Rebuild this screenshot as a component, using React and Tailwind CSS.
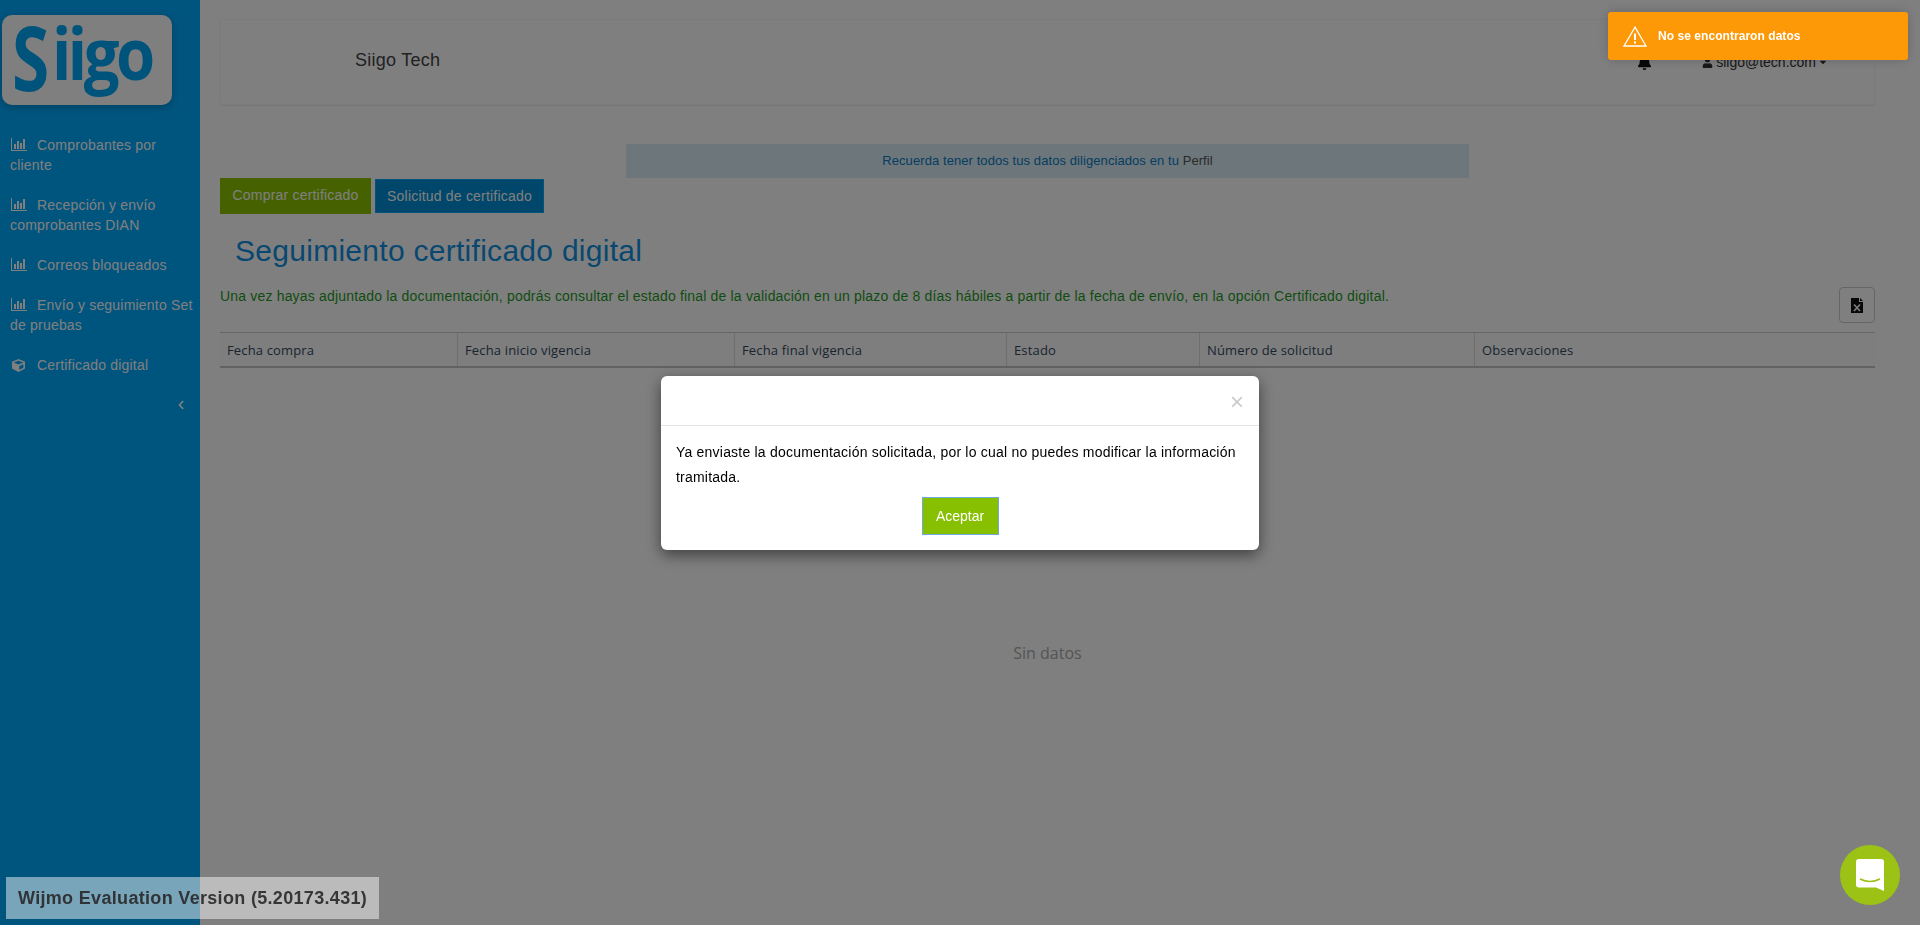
import React from "react";
import { FaBell, FaCube, FaUser, FaCaretDown, FaChevronLeft } from "react-icons/fa";

const BarIcon = () => (
  <svg width="16" height="13" viewBox="0 0 16 13" className="inline-block mr-[10px] ml-[1px] align-[-1px]" fill="currentColor">
    <rect x="0" y="0" width="1" height="13" />
    <rect x="0" y="12" width="16" height="1" />
    <rect x="3" y="6" width="2" height="5" />
    <rect x="6" y="3" width="2" height="8" />
    <rect x="9" y="5" width="2" height="6" />
    <rect x="12" y="1" width="2" height="10" />
  </svg>
);

const menu = ["Comprobantes por cliente", "Recepción y envío comprobantes DIAN", "Correos bloqueados", "Envío y seguimiento Set de pruebas"];
const cols = ["Fecha compra", "Fecha inicio vigencia", "Fecha final vigencia", "Estado", "Número de solicitud", "Observaciones"];

export default function App() {
  return (
    <div className="h-screen flex overflow-hidden bg-white text-[14px] leading-[20px] font-['Liberation_Sans',Arial,sans-serif]">
      <aside className="w-[200px] shrink-0 bg-[#00aaff] text-white">
        <div className="ml-[2px] mt-[15px] w-[170px] h-[90px] bg-white rounded-[10px] shadow-[0_2px_8px_rgba(0,0,0,0.25)] pl-[10px] flex items-baseline text-[#00a8f8] font-['Open_Sans',sans-serif] font-bold leading-[60px]">
          <span className="inline-block w-[40px] text-[90px] origin-left scale-x-[0.75] translate-y-[11px]">S</span>
          <span className="inline-block text-[72px] tracking-[-4px] origin-left scale-x-[0.88]">iigo</span>
        </div>
        <ul className="mt-[30px] pl-[10px] pr-[6px] flex flex-col gap-[20px] tracking-[0.2px]">
          {menu.map((m) => (
            <li key={m}><BarIcon />{m}</li>
          ))}
          <li className="flex items-center">
            <FaCube className="w-[13px] h-[13px] ml-[2px] mr-[12px]" />
            Certificado digital
          </li>
        </ul>
        <div className="flex justify-end pr-[15px] mt-[20px] h-[20px] items-center">
          <FaChevronLeft className="w-[8px] h-[10px]" />
        </div>
      </aside>

      <main className="flex-1 pl-[20px] pr-[45px] min-w-0">
        <header className="mt-[19px] h-[86px] border border-[#f7f7f7] shadow-[0_1px_1px_rgba(0,0,0,0.08)] rounded-[2px] flex items-center justify-between pl-[134px] pr-[46px] text-[#555]">
          <span className="text-[18px] text-[#444] -mt-[4px] tracking-[0.25px]">Siigo Tech</span>
          <div className="flex items-center text-[#333] text-[14px]">
            <span className="relative mr-[50px]">
              <FaBell className="w-[15px] h-[15px] text-[#111]" />
              <span className="absolute top-[1px] left-[11px] w-[11px] h-[2px] rounded-full bg-[#e84c3d]" />
            </span>
            <FaUser className="w-[11px] h-[11px] mr-[3px]" />
            <span>siigo@tech.com</span>
            <FaCaretDown className="w-[10px] h-[10px] ml-[2px]" />
          </div>
        </header>

        <div className="mt-[39px] mx-auto w-[843px] h-[34px] bg-[#d9edf7] flex items-center justify-center text-[13px] tracking-[0.08px] text-[#0a7bc0]">
          Recuerda tener todos tus datos diligenciados en tu&nbsp;<span className="text-[#555]">Perfil</span>
        </div>

        <div className="flex items-center gap-[4px] h-[36px] text-[14px] tracking-[0.2px]">
          <button className="w-[151px] h-[36px] pb-[2px] bg-[#8cc300] text-white">Comprar certificado</button>
          <button className="w-[169px] h-[34px] bg-[#008ed6] border border-[#00aaff] text-white">Solicitud de certificado</button>
        </div>

        <h1 className="mt-[20px] pl-[15px] text-[30px] leading-[33px] tracking-[0.28px] text-[#1190e0]">Seguimiento certificado digital</h1>

        <div className="mt-[19px] flex justify-between items-start text-[#1f9a1f]">
          <p className="tracking-[0.18px]">Una vez hayas adjuntado la documentación, podrás consultar el estado final de la validación en un plazo de 8 días hábiles a partir de la fecha de envío, en la opción Certificado digital.</p>
          <button className="mt-[1px] w-[36px] h-[36px] border border-[#ccc] rounded-[4px] flex items-center justify-center">
            <svg width="12" height="15" viewBox="0 0 12 15">
              <path d="M0 0 H8 V4 H12 V15 H0 Z M9 0 L12 3 H9 Z" fill="#111" />
              <path d="M3 6.500 L9 13 M9 6.500 L3 13" stroke="white" strokeWidth="1.6" />
            </svg>
          </button>
        </div>

        <div className="mt-[9px] grid grid-cols-[238px_277px_272px_193px_275px_1fr] h-[36px] border-t border-t-[#ccc] border-b-2 border-b-[#c4c4c4] font-['Open_Sans',sans-serif] text-[13px] tracking-[0.15px] text-[#34495e]">
          {cols.map((c) => (
            <div key={c} className="pl-[7px] pr-[5px] flex items-center border-r border-[#ddd] last:border-r-0 bg-[#fdfdfd]">{c}</div>
          ))}
        </div>
        <div className="mt-[274px] text-center font-['Open_Sans',sans-serif] text-[16px] leading-[22px] text-[#aaa]">Sin datos</div>
      </main>

      <div className="fixed inset-0 z-10 bg-black/50 flex justify-center items-start pt-[376px]">
        <div className="w-[598px] h-[174px] bg-white rounded-[6px] shadow-[0_5px_15px_rgba(0,0,0,0.5)] text-black">
          <div className="h-[50px] border-b border-[#e5e5e5] flex justify-end items-center pr-[15px] pt-[3px]">
            <span className="text-[24px] text-[#ccc] leading-none">×</span>
          </div>
          <p className="px-[15px] pt-[14px] text-[14px] leading-[25px] tracking-[0.21px]">Ya enviaste la documentación solicitada, por lo cual no puedes modificar la información tramitada.</p>
          <div className="flex justify-center mt-[7px]">
            <button className="w-[77px] h-[38px] pb-[1px] bg-[#87c000] border border-[#6fa8dc] text-white text-[14px]">Aceptar</button>
          </div>
        </div>
      </div>

      <div className="fixed z-20 top-[12px] right-[12px] w-[300px] h-[48px] rounded-[3px] bg-[#fd9807] shadow-[0_0_12px_rgba(0,0,0,0.2)] text-white flex items-center pl-[15px]">
        <svg width="24" height="21" viewBox="0 0 24 21" fill="none" stroke="white" strokeWidth="1.3">
          <path d="M12 1.200 L23 20 H1 Z" strokeLinejoin="miter" />
          <path d="M12 7.500 V14" strokeWidth="2" />
          <path d="M12 15.500 V17.500" strokeWidth="2" />
        </svg>
        <span className="ml-[11px] text-[12px] font-bold tracking-[0.05px]">No se encontraron datos</span>
      </div>

      <div className="fixed z-20 left-[6px] bottom-[6px] w-[373px] h-[42px] bg-white/50 flex items-center pl-[12px] text-[18px] font-bold tracking-[0.32px] text-[#333] opacity-95">
        Wijmo Evaluation Version (5.20173.431)
      </div>

      <div className="fixed z-20 right-[20px] bottom-[20px] w-[60px] h-[60px] rounded-full bg-[#9bc214] flex items-center justify-center">
        <svg width="28" height="32" viewBox="0 0 28 32">
          <path d="M3 0 H25 A3 3 0 0 1 28 3 V32 L20 28.5 H3 A3 3 0 0 1 0 25.500 V3 A3 3 0 0 1 3 0 Z" fill="white" />
          <path d="M4 20 Q14 25 24 20" fill="none" stroke="#9bc214" strokeWidth="1.6" />
        </svg>
      </div>
    </div>
  );
}
